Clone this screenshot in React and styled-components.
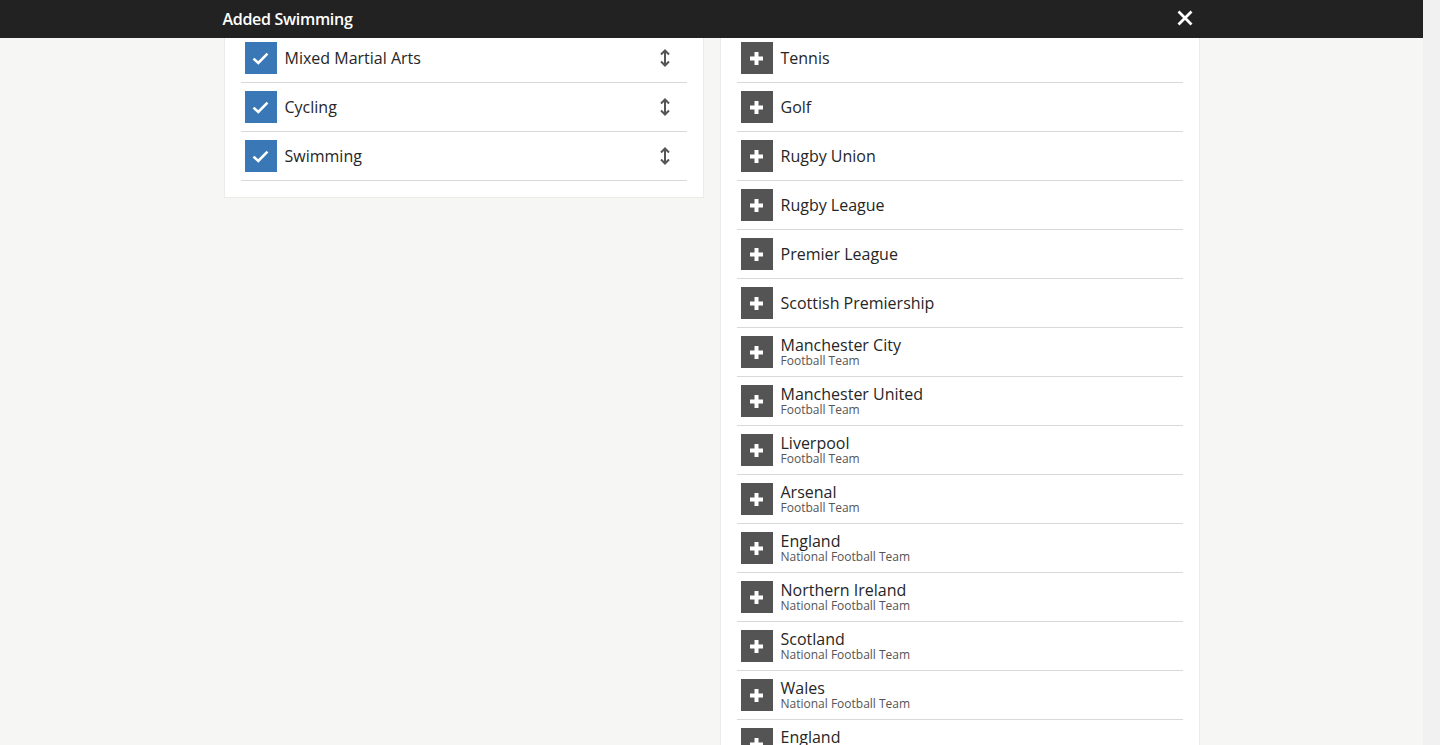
import React from "react";
import styled, { createGlobalStyle } from "styled-components";

const Global = createGlobalStyle`
  html { background: #f1f1f1; }
  html, body { margin: 0; padding: 0; }
  body {
    margin-right: 17px;
    background: #f6f6f4;
    font-family: "Open Sans", "Noto Sans", Arial, sans-serif;
    color: #222;
  }
`;

const Toast = styled.div`
  position: fixed;
  top: 0;
  left: 0;
  right: 17px;
  height: 38px;
  background: #222222;
  color: #fff;
  z-index: 10;
  display: flex;
  justify-content: center;
`;

const ToastInner = styled.div`
  width: 978px;
  display: flex;
  align-items: center;
  justify-content: space-between;
  box-sizing: border-box;
`;

const ToastTitle = styled.span`
  font-weight: 600;
  font-size: 16px;
  letter-spacing: -0.3px;
`;

const CloseBtn = styled.button`
  background: none;
  border: 0;
  padding: 0;
  width: 16px;
  height: 16px;
  margin-right: 8px;
  margin-top: -2px;
  display: flex;
  cursor: pointer;
`;

const Page = styled.main`
  display: flex;
  justify-content: center;
  align-items: flex-start;
  gap: 16px;
  padding-top: 33px;
`;

const Panel = styled.section`
  width: 480px;
  box-sizing: border-box;
  background: #fff;
  border: 1px solid #ebebe9;
  padding: 0 16px ${p => (p.$bottom ? "16px" : "0")};
`;

const List = styled.ul`
  list-style: none;
  margin: 0;
  padding: 0;
`;

const Row = styled.li`
  display: flex;
  align-items: center;
  height: 48px;
  padding: 0 4px;
  border-bottom: 1px solid #d9d9d9;
  gap: 8px;
`;

const Check = styled.span`
  width: 32px;
  height: 32px;
  background: #3a77b6;
  flex: none;
  display: flex;
  align-items: center;
  justify-content: center;
`;

const AddBox = styled.span`
  width: 32px;
  height: 32px;
  background: #545454;
  flex: none;
  display: flex;
  align-items: center;
  justify-content: center;
`;

const Labels = styled.div`
  display: flex;
  flex-direction: column;
  flex: 1;
  min-width: 0;
`;

const Name = styled.span`
  font-size: 16px;
  line-height: 18px;
  color: #262626;
`;

const Sub = styled.span`
  font-size: 12px;
  line-height: 14px;
  color: #555;
`;

const Handle = styled.span`
  width: 12px;
  height: 18px;
  margin-right: 12px;
  display: flex;
  flex: none;
`;

const CheckIcon = () => (
  <svg width="17" height="13" viewBox="0 0 17 13">
    <path d="M1.5 6.6 L6.3 11 L15.5 1.6" fill="none" stroke="#fff" strokeWidth="2.6" />
  </svg>
);

const PlusIcon = () => (
  <svg width="13" height="13" viewBox="0 0 13 13">
    <rect x="4.5" y="0" width="4" height="13" fill="#fff" />
    <rect x="0" y="4.5" width="13" height="4" fill="#fff" />
  </svg>
);

const ReorderIcon = () => (
  <svg width="12" height="18" viewBox="0 0 12 18">
    <path d="M6 2 V16" stroke="#555" strokeWidth="2" />
    <path d="M2 5.5 L6 1.5 L10 5.5" fill="none" stroke="#555" strokeWidth="2" />
    <path d="M2 12.5 L6 16.5 L10 12.5" fill="none" stroke="#555" strokeWidth="2" />
  </svg>
);

const CloseIcon = () => (
  <svg width="16" height="16" viewBox="0 0 16 16">
    <path d="M1.5 1.5 L14.5 14.5 M14.5 1.5 L1.5 14.5" stroke="#fff" strokeWidth="2.8" />
  </svg>
);

const added = ["Mixed Martial Arts", "Cycling", "Swimming"];

const suggestions = [
  { name: "Tennis" },
  { name: "Golf" },
  { name: "Rugby Union" },
  { name: "Rugby League" },
  { name: "Premier League" },
  { name: "Scottish Premiership" },
  { name: "Manchester City", sub: "Football Team" },
  { name: "Manchester United", sub: "Football Team" },
  { name: "Liverpool", sub: "Football Team" },
  { name: "Arsenal", sub: "Football Team" },
  { name: "England", sub: "National Football Team" },
  { name: "Northern Ireland", sub: "National Football Team" },
  { name: "Scotland", sub: "National Football Team" },
  { name: "Wales", sub: "National Football Team" },
  { name: "England", sub: "National Rugby Union Team" },
  { name: "Wales", sub: "National Rugby Union Team" },
  { name: "Scotland", sub: "National Rugby Union Team" },
  { name: "Ireland", sub: "National Rugby Union Team" },
];

export default function App() {
  return (
    <>
      <Global />
      <Toast>
        <ToastInner>
          <ToastTitle>Added Swimming</ToastTitle>
          <CloseBtn aria-label="Close">
            <CloseIcon />
          </CloseBtn>
        </ToastInner>
      </Toast>
      <Page>
        <Panel $bottom>
          <List>
            {added.map(n => (
              <Row key={n}>
                <Check>
                  <CheckIcon />
                </Check>
                <Labels>
                  <Name>{n}</Name>
                </Labels>
                <Handle>
                  <ReorderIcon />
                </Handle>
              </Row>
            ))}
          </List>
        </Panel>
        <Panel>
          <List>
            {suggestions.map((s, i) => (
              <Row key={i}>
                <AddBox>
                  <PlusIcon />
                </AddBox>
                <Labels>
                  <Name>{s.name}</Name>
                  {s.sub && <Sub>{s.sub}</Sub>}
                </Labels>
              </Row>
            ))}
          </List>
        </Panel>
      </Page>
    </>
  );
}
